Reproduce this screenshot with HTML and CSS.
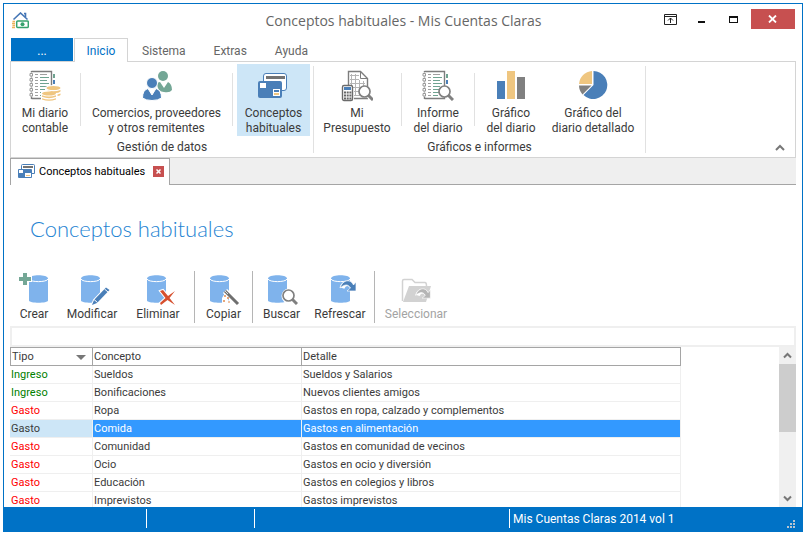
FILE: index.html
```
<!DOCTYPE html>
<html lang="es">
<head>
    <meta charset="UTF-8">
    <meta name="viewport" content="width=device-width, initial-scale=1.0">
    <title>Conceptos habituales - Mis Cuentas Claras</title>
    <link rel="stylesheet" href="styles.css">
</head>
<body>
    <!-- shared icon parts -->
    <svg class="defs" aria-hidden="true">
        <symbol id="database" viewBox="0 0 19 28">
            <path d="M0 3.500C0-1 19-1 19 3.500V25.500C19 28.500 0 28.500 0 25.500Z" fill="#7fb3ec"/>
            <path d="M0 4C1 7.500 18 7.500 19 4" fill="none" stroke="#fff"/>
        </symbol>
        <symbol id="cards" viewBox="0 0 30 26">
            <path d="M5.500 9V3Q5.500.5 8 .5H26Q28.500.5 28.500 3V15Q28.500 17.500 26 17.500H24" fill="#fff" stroke="#4a7fb8"/>
            <path d="M8 3H27V6H8Z" fill="#737373"/>
            <rect x="0" y="8" width="24" height="17" rx="2" fill="#4a7fb8"/>
            <path d="M2 10H8V15H2Z" fill="#fff"/>
            <path d="M15 16H22V23H15Z" fill="#fff"/>
            <path d="M16 17H21V19H16Z" fill="#4a7fb8"/>
            <path d="M16 20H21V22H16Z" fill="#efc680"/>
        </symbol>
        <symbol id="notebook" viewBox="0 0 26 30">
            <path d="M2.500 1V29M2.500 1.500H22.500V28.500H2.500" fill="none" stroke="#7d7d7d" stroke-width="1.400"/>
            <path d="M0 4.500H4M0 9.500H4M0 14.500H4M0 19.500H4M0 24.500H4" stroke="#fff" stroke-width="4"/>
            <path d="M1 3.500H3.500V6H1ZM1 8.500H3.500V11H1ZM1 13.500H3.500V16H1ZM1 18.500H3.500V21H1ZM1 23.500H3.500V26H1Z" fill="#fff" stroke="#999"/>
            <path d="M6 4.500H9M6 7.500H9M6 10.500H9M6 13.500H9M6 16.500H9M6 19.500H9M6 22.500H9M6 25.500H9M11 4.500H18" stroke="#a0a0a0"/>
            <path d="M11 7.500H20M11 10.500H18M11 13.500H20M11 16.500H18M11 19.500H20M11 22.500H18M11 25.500H16" stroke="#6fa391"/>
            <path d="M24 4H26V8H24Z" fill="#6fa391"/>
            <path d="M24 10H26V14H24Z" fill="#4a7fb8"/>
        </symbol>
        <symbol id="lens" viewBox="0 0 16 16">
            <path d="M10 10L15 15" stroke="#fff" stroke-width="5"/>
            <circle cx="6.500" cy="6.500" r="5.500" fill="#fff" stroke="#808080" stroke-width="1.700"/>
            <path d="M10.500 10.500L15 15" stroke="#808080" stroke-width="3"/>
        </symbol>
        <symbol id="turn" viewBox="0 0 18 13">
            <path d="M3 8C5 2 11 2 14 8" fill="none" stroke="#fff" stroke-width="5"/>
            <path d="M1 8C4-1 12-1 14.500 5L17 2V11H8L11.500 8C9 4 6 4 1 8Z" fill="currentColor" stroke="#fff" stroke-width=".7"/>
        </symbol>
    </svg>

    <div class="window">
        <header class="titlebar">
            <svg class="appicon" viewBox="0 0 17 17">
                <path d="M1.500 7.500L8.500 1L15.500 7.500M12 1.500H13.500V5" fill="none" stroke="#4576b5" stroke-width="1.600"/>
                <path d="M.5 9.500H3M0 11.500H3M.5 13.500H3M0 15.500H3" stroke="#eeb25c" stroke-width="1.300"/>
                <rect x="4.700" y="9" width="11.600" height="6.500" rx="1" fill="#fff" stroke="#37a26e" stroke-width="1.500"/>
                <circle cx="10.500" cy="12.200" r="2" fill="#37a26e"/>
            </svg>
            <h1>Conceptos habituales - Mis Cuentas Claras</h1>
            <div class="windowbuttons">
                <button class="winbtn" aria-label="Opciones de la cinta">
                    <svg width="13" height="11" viewBox="0 0 13 11" fill="none" stroke="#222"><path d="M.5.5H12.500V10.500H.5ZM0 2.500H13M6.500 9V4M4 6.500L6.500 4L9 6.500"/></svg>
                </button>
                <button class="winbtn" aria-label="Minimizar">
                    <svg width="9" height="11" viewBox="0 0 9 11"><path d="M1 7H8V9H1Z" fill="#111"/></svg>
                </button>
                <button class="winbtn winmax" aria-label="Maximizar">
                    <svg width="9" height="7" viewBox="0 0 9 7"><path d="M0 0H9V7H0ZM1 2V6H8V2Z" fill="#111" fill-rule="evenodd"/></svg>
                </button>
                <button class="winbtn winclose" aria-label="Cerrar">
                    <svg width="9" height="8" viewBox="0 0 9 8"><path d="M1 .5L8 7.500M8 .5L1 7.500" stroke="#fff" stroke-width="1.800"/></svg>
                </button>
            </div>
        </header>

        <nav class="menutabs">
            <button class="menutab filetab">...</button>
            <button class="menutab active">Inicio</button>
            <button class="menutab">Sistema</button>
            <button class="menutab">Extras</button>
            <button class="menutab">Ayuda</button>
        </nav>

        <section class="ribbon">
            <div class="group">
                <div class="groupitems">
                    <button class="ribbonbtn diary">
                        <svg viewBox="0 0 32 32">
                            <use href="#notebook" width="26" height="30"/>
                            <path d="M12 22Q14 20 16 20V17Q24 13 32 17V25L29 28V31H12Z" fill="#fff"/>
                            <g fill="#efc680">
                                <ellipse cx="24.500" cy="18" rx="7" ry="2"/>
                                <path d="M17.500 20Q24.500 22.500 31.500 20V21.500Q29 23.500 25 23ZM28.500 24.500L31.500 23.500V25Q30.500 26 28.500 26Z"/>
                                <ellipse cx="20" cy="23.500" rx="7" ry="2"/>
                                <path d="M13 25.200Q20 28 27 25.200V26.800Q20 29.500 13 26.800ZM13 28.200Q20 31 27 28.200V29.500Q20 32 13 29.500Z"/>
                            </g>
                        </svg>
                        <span>Mi diario<br>contable</span>
                    </button>
                    <button class="ribbonbtn people">
                        <svg viewBox="0 0 32 32">
                            <g fill="#74a796">
                                <circle cx="22" cy="6" r="5"/>
                                <path d="M16 14Q17 12 19 12L23 18L27 12Q31 14 31 20Q29 23 23 22Q17 22 16 14Z"/>
                            </g>
                            <g fill="#4a7fb8" stroke="#fff">
                                <circle cx="11" cy="13" r="5.500"/>
                                <path d="M1.500 28Q1.500 20 7 18.500L11 25L15 18.500Q20.500 20 20.500 28Q17 30.500 11 30.500Q5 30.500 1.500 28Z"/>
                            </g>
                        </svg>
                        <span>Comercios, proveedores<br>y otros remitentes</span>
                    </button>
                    <button class="ribbonbtn concepts selected">
                        <svg viewBox="0 0 32 32"><use href="#cards" y="3" width="30" height="26"/></svg>
                        <span>Conceptos<br>habituales</span>
                    </button>
                </div>
                <div class="groupname">Gestión de datos</div>
            </div>
            <div class="group">
                <div class="groupitems">
                    <button class="ribbonbtn budget">
                        <svg viewBox="0 0 32 32">
                            <path d="M7.500 15V1.500H19.500L26.500 8.500V28.500H13" fill="#fff" stroke="#7d7d7d" stroke-width="1.400"/>
                            <path d="M19.500 1.500V8.500H26.500" fill="none" stroke="#7d7d7d"/>
                            <path d="M9 5.500H18M9 9.500H18M9 13.500H24M12 17.500H24M13 21.500H24M13 25.500H24M10.500 4V15M14.500 4V26M18.500 10V26M22.500 11V26" stroke="#b5b5b5"/>
                            <rect x="1.500" y="15.500" width="10" height="15" rx="1.500" fill="#fff" stroke="#6b6b6b" stroke-width="1.400"/>
                            <path d="M3 17H10V20H3Z" fill="#4a7fb8"/>
                            <path d="M3 22.500H10.500M3 25.500H10.500M3 28.500H10.500" stroke="#666" stroke-width="2" stroke-dasharray="2 .7"/>
                            <use href="#lens" x="17" y="15" width="16" height="16"/>
                        </svg>
                        <span>Mi<br>Presupuesto</span>
                    </button>
                    <button class="ribbonbtn report">
                        <svg viewBox="0 0 32 32">
                            <use href="#notebook" width="26" height="30"/>
                            <use href="#lens" x="16" y="15" width="16" height="16"/>
                        </svg>
                        <span>Informe<br>del diario</span>
                    </button>
                    <button class="ribbonbtn chart">
                        <svg viewBox="0 0 32 32">
                            <path d="M2 11H10V29H2Z" fill="#4a7fb8"/>
                            <path d="M12 1H20V29H12Z" fill="#efc680"/>
                            <path d="M22 7H30V29H22Z" fill="#808080"/>
                        </svg>
                        <span>Gráfico<br>del diario</span>
                    </button>
                    <button class="ribbonbtn piechart">
                        <svg viewBox="0 0 32 32">
                            <path d="M16.500 1A14 14 0 1 1 6.500 25L16.500 15Z" fill="#4a7fb8"/>
                            <path d="M15 1V14H2A14 14 0 0 1 15 1Z" fill="#efc680"/>
                            <path d="M2 15.500H14.500L5.500 24.500Q2 20.500 2 15.500Z" fill="#808080"/>
                        </svg>
                        <span>Gráfico del<br>diario detallado</span>
                    </button>
                </div>
                <div class="groupname">Gráficos e informes</div>
            </div>
            <button class="collapse" aria-label="Contraer la cinta">
                <svg width="10" height="7" viewBox="0 0 10 7"><path d="M1 6L5 2L9 6" fill="none" stroke="#777" stroke-width="2"/></svg>
            </button>
        </section>

        <div class="doctabs">
            <div class="doctab">
                <svg width="17" height="15" viewBox="0 0 17 15">
                    <path d="M3.500 5V1.500Q3.500.5 4.500.5H15.500Q16.500.5 16.500 1.500V9.500H14" fill="#fff" stroke="#4a7fb8"/>
                    <path d="M5 2H15V4H5Z" fill="#737373"/>
                    <rect y="5" width="14" height="9" rx="1" fill="#4a7fb8"/>
                    <path d="M1 6H5V9H1ZM7 9H13V13H7Z" fill="#fff"/>
                    <path d="M8 11H12V12H8Z" fill="#efc680"/>
                </svg>
                <span>Conceptos habituales</span>
                <button class="closetab" aria-label="Cerrar pestaña">
                    <svg width="5" height="5" viewBox="0 0 5 5"><path d="M.5.5L4.500 4.500M4.500.5L.5 4.500" stroke="#fff" stroke-width="1.500"/></svg>
                </button>
            </div>
        </div>

        <main class="content">
            <h2>Conceptos habituales</h2>
            <div class="toolbar">
                <button class="toolbtn create">
                    <svg viewBox="0 0 36 36">
                        <use href="#database" x="13" y="4" width="19" height="28"/>
                        <path d="M7 2H11V6H15V10H11V14H7V10H3V6H7Z" fill="#74a796" stroke="#fff" stroke-width="2" paint-order="stroke"/>
                    </svg>
                    <span>Crear</span>
                </button>
                <button class="toolbtn modify">
                    <svg viewBox="0 0 36 36">
                        <use href="#database" x="7" y="4" width="19" height="28"/>
                        <path d="M18 34L20 29L32 16.500L35.500 19L23 32Z" fill="#4a7fb8" stroke="#fff" stroke-width="2" paint-order="stroke"/>
                        <path d="M20 28.500L23.500 31.500M30.500 18L34 21" stroke="#fff"/>
                    </svg>
                    <span>Modificar</span>
                </button>
                <button class="toolbtn delete">
                    <svg viewBox="0 0 36 36">
                        <use href="#database" x="7" y="4" width="19" height="28"/>
                        <path d="M20 20L23 19L28 25L35 20L29.500 27L35 34L27.500 29L21 34L20 32L25.500 27Z" fill="#d6502f" stroke="#fff" stroke-width="2" paint-order="stroke"/>
                    </svg>
                    <span>Eliminar</span>
                </button>
                <span class="divider"></span>
                <button class="toolbtn copy">
                    <svg viewBox="0 0 36 36">
                        <use href="#database" x="4" y="4" width="19" height="28"/>
                        <path d="M19 22L24 32H16V27Z" fill="#fff"/>
                        <path d="M19 20L32 33" stroke="#fff" stroke-width="6"/>
                        <path d="M19 20L32 33" stroke="#6f6f6f" stroke-width="3"/>
                        <path d="M19 20L22 23" stroke="#ddd"/>
                        <path d="M19 24V26M18 25H20M22 26V28M21 27H23M18 29V31M17 30H19M23 30V32" stroke="#e18a4d"/>
                    </svg>
                    <span>Copiar</span>
                </button>
                <span class="divider"></span>
                <button class="toolbtn search">
                    <svg viewBox="0 0 36 36">
                        <use href="#database" x="4" y="4" width="19" height="28"/>
                        <circle cx="25" cy="25" r="7.500" fill="#fff"/>
                        <use href="#lens" x="18" y="18" width="16" height="16"/>
                    </svg>
                    <span>Buscar</span>
                </button>
                <button class="toolbtn refresh">
                    <svg viewBox="0 0 36 36">
                        <use href="#database" x="9" y="4" width="19" height="28"/>
                        <use href="#turn" x="17" y="9" width="18" height="13"/>
                    </svg>
                    <span>Refrescar</span>
                </button>
                <span class="divider"></span>
                <button class="toolbtn select" disabled>
                    <svg viewBox="0 0 36 36">
                        <path d="M4.500 30V10Q4.500 8.500 6 8.500H14L17 11.500H27Q28.500 11.500 28.500 15" fill="none" stroke="#d2d2d2" stroke-width="1.500"/>
                        <path d="M5 31L11 15H33L28 31Z" fill="#d2d2d2"/>
                        <use href="#turn" x="16" y="17" width="18" height="12"/>
                    </svg>
                    <span>Seleccionar</span>
                </button>
            </div>
            <input class="filter" type="text" aria-label="Filtro">
            <div class="grid">
                <div class="gridview">
                    <table>
                        <thead>
                            <tr>
                                <th class="type">Tipo <button class="sort" aria-label="Ordenar"></button></th>
                                <th class="concept">Concepto</th>
                                <th class="detail">Detalle</th>
                            </tr>
                        </thead>
                        <tbody>
                            <tr class="income"><td>Ingreso</td><td>Sueldos</td><td>Sueldos y Salarios</td></tr>
                            <tr class="income"><td>Ingreso</td><td>Bonificaciones</td><td>Nuevos clientes amigos</td></tr>
                            <tr class="expense"><td>Gasto</td><td>Ropa</td><td>Gastos en ropa, calzado y complementos</td></tr>
                            <tr class="current"><td>Gasto</td><td>Comida</td><td>Gastos en alimentación</td></tr>
                            <tr class="expense"><td>Gasto</td><td>Comunidad</td><td>Gastos en comunidad de vecinos</td></tr>
                            <tr class="expense"><td>Gasto</td><td>Ocio</td><td>Gastos en ocio y diversión</td></tr>
                            <tr class="expense"><td>Gasto</td><td>Educación</td><td>Gastos en colegios y libros</td></tr>
                            <tr class="expense"><td>Gasto</td><td>Imprevistos</td><td>Gastos imprevistos</td></tr>
                        </tbody>
                    </table>
                </div>
                <div class="scrollbar">
                    <button class="scrollbtn" aria-label="Subir">
                        <svg width="9" height="7" viewBox="0 0 9 7"><path d="M1 5.500L4.500 2L8 5.500" fill="none" stroke="#777" stroke-width="2"/></svg>
                    </button>
                    <div class="track"><div class="thumb"></div></div>
                    <button class="scrollbtn" aria-label="Bajar">
                        <svg width="9" height="7" viewBox="0 0 9 7"><path d="M1 1.500L4.500 5L8 1.500" fill="none" stroke="#777" stroke-width="2"/></svg>
                    </button>
                </div>
            </div>
        </main>

        <footer class="statusbar">
            <div class="panel first"></div>
            <div class="panel second"></div>
            <div class="panel third"></div>
            <div class="panel version">Mis Cuentas Claras 2014 vol 1</div>
            <svg class="grip" width="8" height="8" viewBox="0 0 8 8"><path d="M6 0H8V2H6ZM3 3H5V5H3ZM6 3H8V5H6ZM0 6H2V8H0ZM3 6H5V8H3ZM6 6H8V8H6Z" fill="#b9c4cf"/></svg>
        </footer>
    </div>
</body>
</html>
```
FILE: styles.css
```
* {
    box-sizing: border-box;
}

body {
    margin: 0;
    padding: 3px 4px 4px 3px;
    height: 100vh;
    background-color: #fff;
    color: #3b3b3b;
    font-family: Roboto, "Open Sans", sans-serif;
    font-size: 12px;
}

button {
    margin: 0;
    padding: 0;
    border: none;
    background: none;
    color: inherit;
    font: inherit;
}

svg {
    display: block;
    flex: none;
}

.defs {
    position: absolute;
    width: 0;
    height: 0;
}

.window {
    display: flex;
    flex-direction: column;
    height: 100%;
    border: 1px solid #0072c6;
    border-bottom: none;
}

/* title bar */
.titlebar {
    display: grid;
    grid-template-columns: 140px 1fr 140px;
    height: 34px;
    flex: none;
    padding: 0 7px 0 8px;
}

.appicon {
    width: 17px;
    height: 17px;
    margin-top: 8px;
}

.titlebar h1 {
    margin: 0;
    text-align: center;
    font-family: "Open Sans", sans-serif;
    font-size: 14px;
    line-height: 34px;
    font-weight: normal;
    color: #666;
}

.windowbuttons {
    display: flex;
    justify-content: flex-end;
    padding-top: 5px;
}

.winbtn {
    display: flex;
    justify-content: center;
    align-items: center;
    width: 32px;
    height: 20px;
}

.winmax {
    width: 36px;
}

.winclose {
    width: 46px;
    background-color: #c75050;
}

/* menu tabs */
.menutabs {
    display: flex;
    flex: none;
    height: 24px;
    margin: 0 6px -1px;
    padding-left: 1px;
    position: relative;
}

.menutab {
    padding: 2px 14px 0;
    height: 23px;
    color: #666;
}

.filetab {
    width: 62px;
    background-color: #0072c6;
    color: #fff;
}

.menutab.active {
    width: 54px;
    height: 24px;
    margin-left: 1px;
    padding: 1px 0 0;
    border: 1px solid #d4d4d4;
    border-bottom: none;
    background-color: #fff;
    color: #0072c6;
}

/* ribbon */
.ribbon {
    display: flex;
    flex: none;
    height: 97px;
    margin: 0 6px;
    border: 1px solid #d4d4d4;
}

.group {
    padding: 2px 3px 0;
    border-right: 1px solid #e1e1e1;
    border-image: linear-gradient(#fff 5px, #e1e1e1 5px, #e1e1e1 90px, #fff 90px) 1;
}

.groupitems {
    display: flex;
    gap: 4px;
}

.ribbonbtn {
    display: flex;
    flex-direction: column;
    align-items: center;
    height: 72px;
    padding-top: 6px;
    line-height: 15px;
    white-space: nowrap;
}

.ribbonbtn svg {
    width: 32px;
    height: 32px;
    margin-bottom: 4px;
}

.ribbonbtn.selected {
    background-color: #cde6f7;
}

.diary {
    width: 62px;
}

.people {
    width: 153px;
    border: solid #e1e1e1;
    border-width: 0 1px;
    border-image: linear-gradient(#fff 10px, #e1e1e1 10px, #e1e1e1 61px, #fff 61px) 1;
}

.concepts {
    width: 73px;
}

.budget {
    width: 80px;
}

.report {
    width: 74px;
    border: solid #e1e1e1;
    border-width: 0 1px;
    border-image: linear-gradient(#fff 10px, #e1e1e1 10px, #e1e1e1 61px, #fff 61px) 1;
}

.chart {
    width: 64px;
}

.piechart {
    width: 92px;
    margin-right: 3px;
}

.groupname {
    text-align: center;
    line-height: 22px;
}

.collapse {
    margin: auto 10px 6px auto;
}

/* document tabs */
.doctabs {
    display: flex;
    flex: none;
    height: 27px;
    margin: 0 6px;
    background-color: #efefef;
    box-shadow: inset 0 -1px #a5a5a5;
}

.doctab {
    display: flex;
    align-items: center;
    gap: 4px;
    padding: 0 5px 2px 7px;
    border: 1px solid #a5a5a5;
    border-bottom: none;
    background-color: #fff;
    color: #000;
    font-size: 11px;
}

.closetab {
    display: flex;
    justify-content: center;
    align-items: center;
    width: 11px;
    height: 11px;
    margin-left: 4px;
    background-color: #c75050;
}

/* content */
.content {
    display: flex;
    flex-direction: column;
    flex: 1;
    min-height: 0;
    padding: 0 6px;
}

.content h2 {
    margin: 0;
    padding: 29px 0 26px 20px;
    font-family: Lato, sans-serif;
    font-size: 22px;
    line-height: 30px;
    font-weight: 300;
    color: #1e83d2;
}

.toolbar {
    display: flex;
    flex: none;
    height: 56px;
    padding-left: 1px;
}

.toolbtn {
    display: flex;
    flex-direction: column;
    align-items: center;
    padding-top: 1px;
    line-height: 14px;
}

.toolbtn svg {
    width: 36px;
    height: 36px;
}

.toolbtn:disabled {
    color: #a3a3a3;
}

.create {
    width: 46px;
}

.modify {
    width: 70px;
}

.delete {
    width: 62px;
    margin-right: 5px;
}

.copy {
    width: 57px;
}

.search {
    width: 57px;
}

.refresh {
    width: 60px;
    margin-right: 4px;
}

.refresh svg {
    color: #4a7fb8;
}

.select {
    width: 82px;
}

.select svg {
    color: #b5b5b5;
}

.divider {
    width: 1px;
    height: 52px;
    margin-top: 1px;
    background-color: #b5b5b5;
}

.filter {
    flex: none;
    width: 100%;
    height: 21px;
    padding: 0 4px;
    border: 2px solid #efefef;
    background-color: #fff;
    font: inherit;
}

/* data grid */
.grid {
    display: flex;
    flex: 1;
    min-height: 0;
}

.gridview {
    flex: 1;
    overflow: hidden;
}

table {
    table-layout: fixed;
    width: 671px;
    border-spacing: 0;
    font-size: 11px;
}

th,
td {
    height: 18px;
    padding: 0 1px;
    border-right: 1px solid #efefef;
    border-bottom: 1px solid #efefef;
    line-height: 17px;
    text-align: left;
    font-weight: normal;
    white-space: nowrap;
}

th {
    height: 19px;
    border-color: #a5a5a5;
    border-top: 1px solid #a5a5a5;
}

th:first-child {
    border-left: 1px solid #a5a5a5;
}

.type {
    width: 83px;
}

.concept {
    width: 209px;
}

.sort {
    float: right;
    margin: 7px 5px 0 0;
    border: 5px solid transparent;
    border-top-color: #777;
    border-bottom: none;
}

.income td:first-child {
    color: #008000;
}

.expense td:first-child {
    color: #f00;
}

.current td {
    background-color: #39f;
    background-clip: padding-box;
    color: #fff;
}

.current td:first-child {
    background-color: #cde6f7;
    color: #3b3b3b;
}

.scrollbar {
    display: flex;
    flex-direction: column;
    width: 17px;
    background-color: #f0f0f0;
}

.scrollbtn {
    display: flex;
    justify-content: center;
    align-items: center;
    height: 17px;
}

.track {
    flex: 1;
}

.thumb {
    height: 54%;
    background-color: #cdcdcd;
}

/* status bar */
.statusbar {
    display: flex;
    flex: none;
    height: 25px;
    margin: 0 -1px;
    padding: 2px 8px 4px 1px;
    background-color: #0072c6;
    color: #fff;
}

.panel {
    border-right: 1px solid #fff;
}

.first {
    width: 143px;
}

.second {
    width: 108px;
}

.third {
    width: 255px;
}

.version {
    flex: 1;
    padding-left: 3px;
    border: none;
    line-height: 20px;
}

.grip {
    align-self: flex-end;
}
```
